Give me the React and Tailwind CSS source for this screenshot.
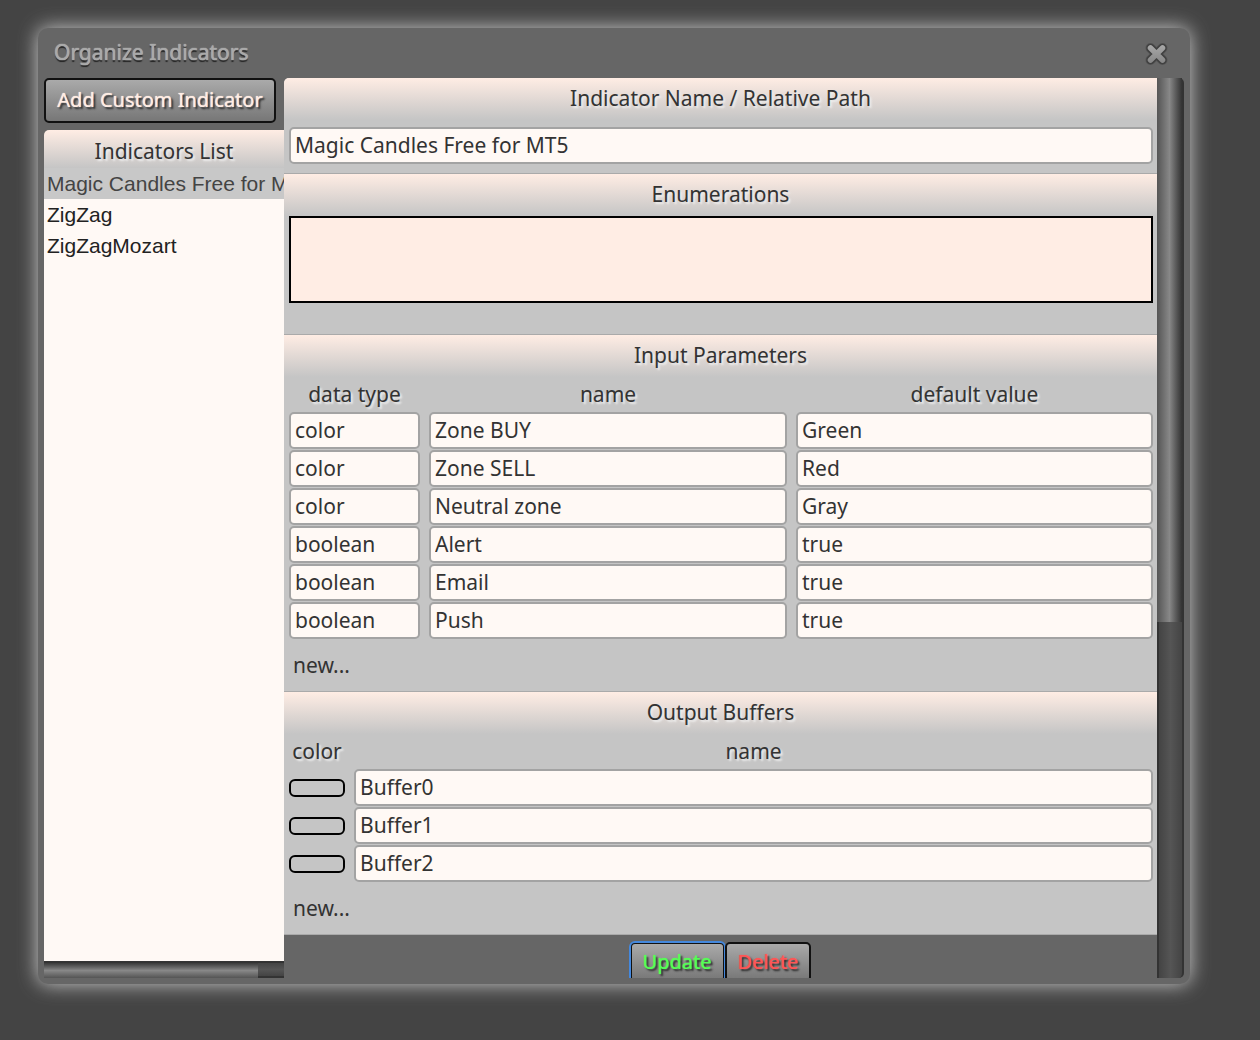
import React, { useState } from 'react'

const indicators = ['Magic Candles Free for MT5', 'ZigZag', 'ZigZagMozart']

const inputParams = [
  { type: 'color', name: 'Zone BUY', value: 'Green' },
  { type: 'color', name: 'Zone SELL', value: 'Red' },
  { type: 'color', name: 'Neutral zone', value: 'Gray' },
  { type: 'boolean', name: 'Alert', value: 'true' },
  { type: 'boolean', name: 'Email', value: 'true' },
  { type: 'boolean', name: 'Push', value: 'true' },
]

const buffers = ['Buffer0', 'Buffer1', 'Buffer2']

const Field = ({ label, value }) => (
  <input
    type="text"
    aria-label={label}
    defaultValue={value}
    className="block w-full h-[37px] px-1 pb-0.5 border-2 border-[#a3a3a3] rounded-[5px] bg-[#fff9f5] text-[#333] outline-none"
  />
)

const Section = ({ title, className = '', children }) => (
  <section className={`border-b border-[#aaa] bg-[#c5c5c5] ${className}`}>
    <h2 className="h-[42px] leading-[41px] text-center bg-linear-to-b from-[#ffede4] to-[#c5c5c5] [text-shadow:2px_2px_2px_#eee]">
      {title}
    </h2>
    <div className="pl-[5px] pr-1">{children}</div>
  </section>
)

const NewLink = () => (
  <button type="button" className="block h-[52px] px-1 pt-0.5 cursor-pointer">new...</button>
)

const Button = ({ className, children }) => (
  <button
    type="button"
    className={`border-2 border-[#111] rounded-[5px] bg-linear-to-b from-[#aaa] to-[#777] text-[20px] cursor-pointer [text-shadow:0_0_1px_currentColor,2px_2px_2px_#222] ${className}`}
  >
    {children}
  </button>
)

const CloseIcon = () => (
  <svg width="26" height="26" viewBox="0 0 26 26" fill="none" strokeLinecap="round">
    <defs>
      <linearGradient id="cross" x1="0" y1="4" x2="0" y2="22" gradientUnits="userSpaceOnUse">
        <stop offset="0" stopColor="#aaa" />
        <stop offset="1" stopColor="#888" />
      </linearGradient>
    </defs>
    <path d="M6.500 8 18.500 20M18.500 8 6.500 20" stroke="#555" strokeWidth="10" />
    <path d="M6.500 8 18.500 20M18.500 8 6.500 20" stroke="#404040" strokeWidth="8.500" />
    <path d="M6.500 8 18.500 20M18.500 8 6.500 20" stroke="url(#cross)" strokeWidth="5.500" />
  </svg>
)

const App = () => {
  const [selected, setSelected] = useState(indicators[0])

  return (
    <div className="h-screen bg-[#444] pt-7 pr-[70px] pb-14 pl-[38px] font-['Noto_Sans',sans-serif] text-[21px] text-[#333]">
      <div
        role="dialog"
        aria-labelledby="dialog-title"
        className="flex flex-col h-full p-1.5 pt-0 rounded-[10px] bg-[#666] shadow-[0_0_20px_#ccc]"
      >
        <header className="flex shrink-0 items-center justify-between h-[50px] pl-2.5 pr-3.5">
          <h1
            id="dialog-title"
            className="text-[#aaa] [text-shadow:0_0_1px_#aaa,0_0_1px_#aaa,0_2px_1px_#222]"
          >
            Organize Indicators
          </h1>
          <button type="button" aria-label="Close" className="cursor-pointer">
            <CloseIcon />
          </button>
        </header>

        <div className="flex flex-1 min-h-0">
          <aside className="flex flex-col shrink-0 w-60">
            <Button className="shrink-0 h-[45px] mr-2 mb-[7px] pb-0.5 text-[#ffede4]">Add Custom Indicator</Button>
            <h2 className="shrink-0 h-[38px] leading-[42px] text-center rounded-tl-[5px] bg-linear-to-b from-[#ffede4] to-[#c5c5c5] [text-shadow:2px_2px_2px_#eee]">
              Indicators List
            </h2>
            <ul className="flex-1 min-h-0 overflow-hidden bg-[#fff9f5] font-['Liberation_Sans',sans-serif]">
              {indicators.map((name) => (
                <li key={name}>
                  <button
                    type="button"
                    onClick={() => setSelected(name)}
                    className={`block w-full h-[31px] px-[3px] pb-1 text-left whitespace-nowrap overflow-hidden cursor-pointer ${
                      selected === name ? 'bg-[#c8c8c8] text-[#444]' : 'text-[#222]'
                    }`}
                  >
                    {name}
                  </button>
                </li>
              ))}
            </ul>
            <div className="flex shrink-0 h-[17px] border-y-2 border-[#333] bg-linear-to-b from-[#444] via-[#555] to-[#444]">
              <div className="w-[214px] -mb-0.5 bg-linear-to-b from-[#3a3a3a] via-[#888] to-[#555]" />
            </div>
          </aside>

          <main className="flex-1 min-w-0 overflow-hidden rounded-tl-[5px]">
            <Section title="Indicator Name / Relative Path" className="pb-[9px]">
              <div className="pt-[7px]">
                <Field label="Indicator Name / Relative Path" value="Magic Candles Free for MT5" />
              </div>
            </Section>

            <Section title="Enumerations" className="pb-[31px]">
              <textarea
                aria-label="Enumerations"
                className="block w-full h-[87px] border-2 border-black bg-[#ffede4] resize-none outline-none"
              />
            </Section>

            <Section title="Input Parameters">
              <table className="w-full table-fixed">
                <thead className="[text-shadow:2px_2px_2px_#eee]">
                  <tr className="h-[35px]">
                    <th className="w-[140px] p-0 pr-[9px] font-normal">data type</th>
                    <th className="p-0 pr-1 font-normal">name</th>
                    <th className="p-0 pl-[5px] font-normal">default value</th>
                  </tr>
                </thead>
                <tbody>
                  {inputParams.map((param, i) => (
                    <tr key={param.name} className="h-[38px] align-top last:h-[37px]">
                      <td className="p-0 pr-[9px]"><Field label={`data type ${i + 1}`} value={param.type} /></td>
                      <td className="p-0 pr-1"><Field label={`name ${i + 1}`} value={param.name} /></td>
                      <td className="p-0 pl-[5px]"><Field label={`default value ${i + 1}`} value={param.value} /></td>
                    </tr>
                  ))}
                </tbody>
              </table>
              <NewLink />
            </Section>

            <Section title="Output Buffers">
              <table className="w-full table-fixed">
                <thead className="[text-shadow:2px_2px_2px_#eee]">
                  <tr className="h-[35px]">
                    <th className="w-[65px] p-0 pr-[9px] font-normal">color</th>
                    <th className="p-0 font-normal">name</th>
                  </tr>
                </thead>
                <tbody>
                  {buffers.map((name) => (
                    <tr key={name} className="h-[38px] align-top last:h-[37px]">
                      <td className="p-0 pt-2.5 pr-[9px]">
                        <button
                          type="button"
                          aria-label={`${name} color`}
                          className="block w-full h-[18px] border-2 border-black rounded-md cursor-pointer"
                        />
                      </td>
                      <td className="p-0"><Field label={`${name} name`} value={name} /></td>
                    </tr>
                  ))}
                </tbody>
              </table>
              <NewLink />
            </Section>

            <footer className="flex justify-center pt-[7px]">
              <Button className="h-10 px-[11px] text-[#5f5] outline-2 -outline-offset-1 outline-[#48d]">Update</Button>
              <Button className="h-10 px-[11px] text-[#f55]">Delete</Button>
            </footer>
          </main>

          <div className="shrink-0 w-[27px] rounded-r-[5px] border-x-2 border-[#333] bg-linear-to-r from-[#444] via-[#555] to-[#444]">
            <div className="h-[544px] -ml-0.5 bg-linear-to-r from-[#555] via-[#888] to-[#333]" />
          </div>
        </div>
      </div>
    </div>
  )
}

export default App
